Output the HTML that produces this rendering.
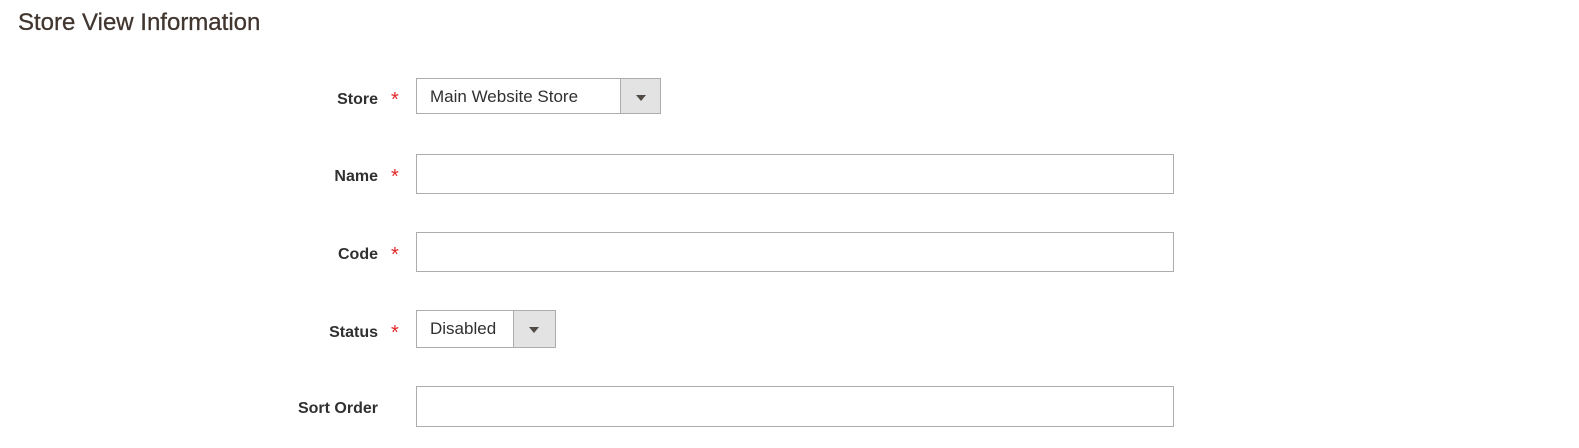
<!DOCTYPE html>
<html><head><style>
body{margin:0;background:#fff;width:1579px;height:448px;overflow:hidden;font-family:"Liberation Sans",sans-serif;color:#303030;}
h1{position:absolute;left:18px;top:9px;margin:0;font-size:24px;font-weight:normal;color:#41362f;-webkit-text-stroke:0.3px #41362f;}
.lbl{position:absolute;right:1201px;font-size:16px;font-weight:bold;color:#303030;text-align:right;}
.ast{position:absolute;left:391px;font-size:20px;color:#e22626;}
.box{position:absolute;left:416px;border:1px solid #adadad;box-sizing:border-box;background:#fff;}
.sel{font-size:17px;color:#303030;padding:0 0 0 13px;line-height:36px;}
.btn{position:absolute;right:0;top:0;bottom:0;background:#e3e3e3;border-left:1px solid #adadad;width:39px;}
.btn:after{content:"";position:absolute;left:15px;top:16px;border-left:5px solid transparent;border-right:5px solid transparent;border-top:6px solid #514943;}
</style></head><body>
<h1>Store View Information</h1>

<div class="lbl" style="top:91px">Store</div><div class="ast" style="top:89px">*</div>
<div class="box sel" style="top:78px;width:245px;height:36px">Main Website Store<div class="btn"></div></div>

<div class="lbl" style="top:168px">Name</div><div class="ast" style="top:166px">*</div>
<div class="box" style="top:154px;width:758px;height:40px"></div>

<div class="lbl" style="top:246px">Code</div><div class="ast" style="top:244px">*</div>
<div class="box" style="top:232px;width:758px;height:40px"></div>

<div class="lbl" style="top:324px">Status</div><div class="ast" style="top:322px">*</div>
<div class="box sel" style="top:310px;width:140px;height:38px;line-height:36px">Disabled<div class="btn" style="width:41px"></div></div>

<div class="lbl" style="top:400px">Sort Order</div>
<div class="box" style="top:386px;width:758px;height:41px"></div>
</body></html>
